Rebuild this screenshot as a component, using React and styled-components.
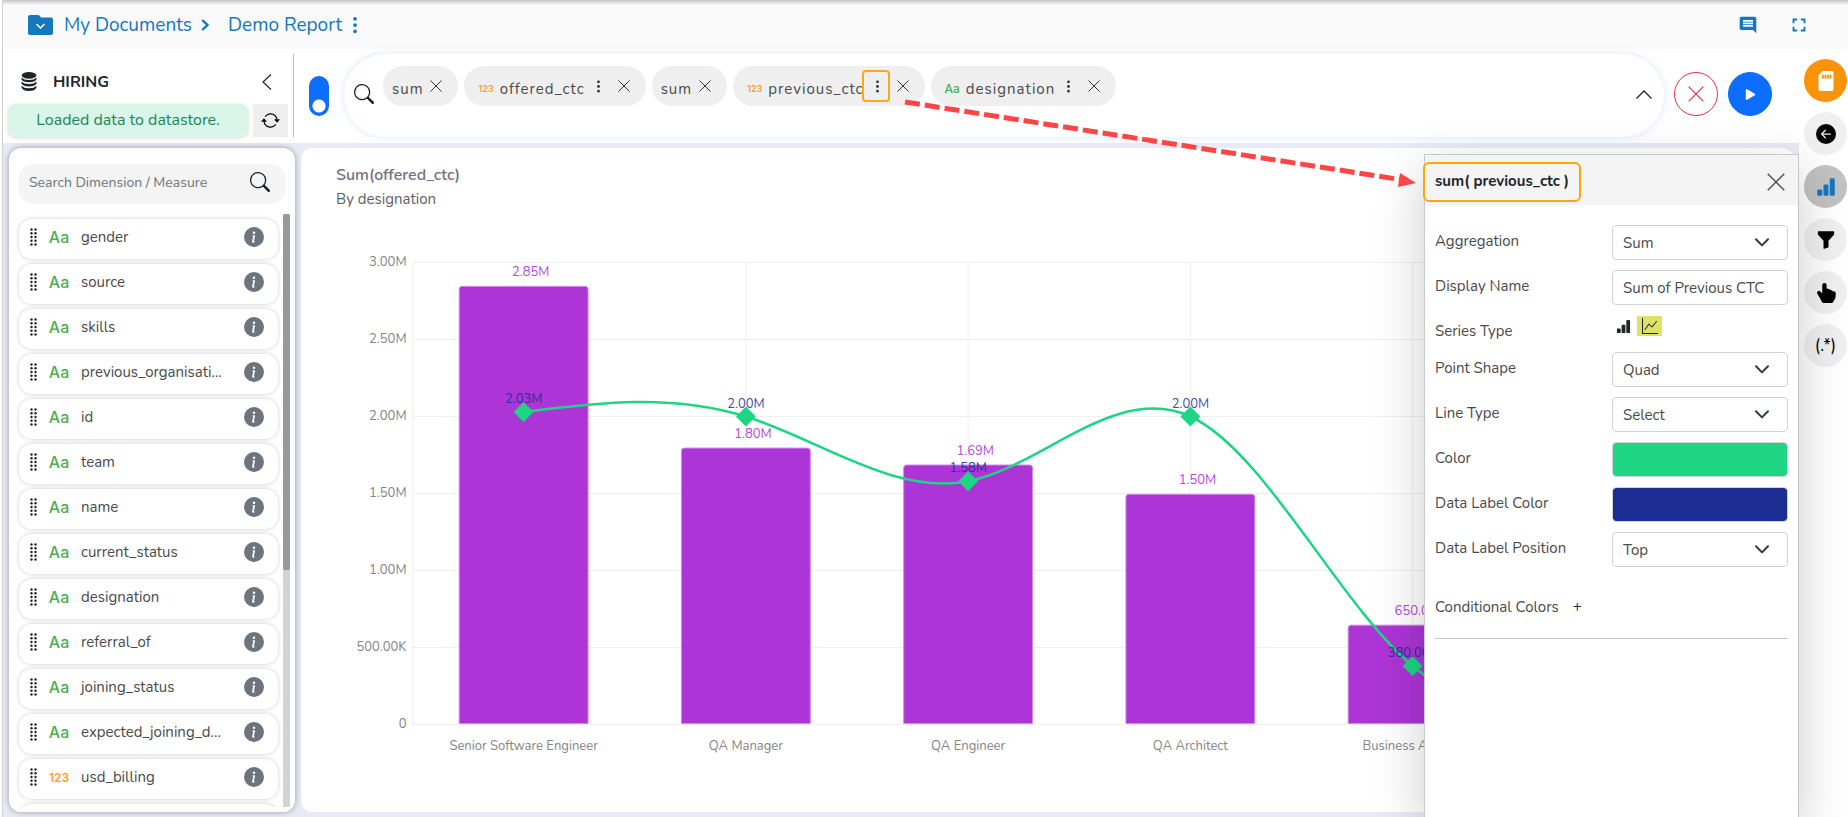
import React, { useLayoutEffect, useRef, useState } from "react";
import styled, { createGlobalStyle } from "styled-components";
import {
  BsSearch,
  BsThreeDotsVertical,
  BsInfoCircleFill,
  BsArrowRepeat,
  BsPlayFill,
  BsSdCardFill,
  BsArrowLeftCircleFill,
  BsBarChartFill,
  BsFunnelFill,
  BsGraphUp,
  BsHandIndexThumbFill,
} from "react-icons/bs";
import { MdComment, MdFullscreen } from "react-icons/md";

const GlobalStyle = createGlobalStyle`
  *, *::before, *::after { box-sizing: border-box; }
  html, body { margin: 0; background: #fff; }
  body, button, input, select {
    font-family: Nunito, Lato, "Open Sans", sans-serif;
    font-size: 15px;
    color: #4a4a4a;
  }
  button { padding: 0; border: 0; background: none; cursor: pointer; }
  h1, h2, h3, p, ul { margin: 0; padding: 0; font-weight: 400; }
  svg { display: block; flex: none; }
`;

/* ---------- shell ---------- */

const Page = styled.div`
  display: flex;
  flex-direction: column;
  height: 100vh;
  min-height: 640px;
  margin-left: 2px;
  border-left: 1px solid #d2d2d2;
  position: relative;
  overflow: hidden;
`;

const TopBar = styled.header`
  flex: none;
  height: 49px;
  display: flex;
  align-items: center;
  justify-content: space-between;
  padding: 0 38px 0 25px;
  background: linear-gradient(#c4c4c4, #fafafa 5px);
  color: #1577bd;
`;

const Crumbs = styled.nav`
  display: flex;
  align-items: center;
`;

const CrumbLink = styled.a`
  font-size: 19px;
  line-height: 28px;
  color: #1577bd;
  text-decoration: none;

  svg + & { margin-left: 11px; }
`;

const CrumbArrow = styled.span`
  padding: 0 19px 0 9px;
`;

const CrumbMenu = styled.button`
  color: #1577bd;
  padding-left: 3px;
`;

const TopActions = styled.div`
  display: flex;
  align-items: center;
  gap: 30px;

  button { color: #1577bd; }
`;

const Body = styled.div`
  flex: 1;
  min-height: 0;
  display: flex;
`;

const Content = styled.main`
  flex: 1;
  min-width: 0;
  position: relative;
  z-index: 1;
  display: flex;
  flex-direction: column;
`;

const Toolbar = styled.div`
  flex: none;
  display: flex;
  align-items: center;
  padding: 5px 27px 6px 5px;
  background: #fff;
`;

const Workspace = styled.div`
  flex: 1;
  min-height: 0;
  display: flex;
  gap: 6px;
  padding: 5px 5px 5px 6px;
  background: #e8ebf6;
`;

/* ---------- data source ---------- */

const Source = styled.section`
  flex: none;
  width: 286px;
  height: 83px;
  display: flex;
  flex-direction: column;
  justify-content: space-between;
  border-right: 1px solid #bcbcbc;
`;

const SourceHead = styled.div`
  flex: 1;
  display: flex;
  align-items: center;
  gap: 16px;
  padding: 5px 21px 0 13px;
  color: #212529;
`;

const SourceName = styled.h2`
  flex: 1;
  font-size: 16px;
  font-weight: 700;
  color: #212529;
`;

const SourceFoot = styled.div`
  display: flex;
  gap: 5px;
  padding-right: 5px;
`;

const Status = styled.p`
  flex: 1;
  height: 33px;
  border-radius: 8px;
  background: #daf6ea;
  box-shadow: 0 1px 4px rgba(0, 0, 0, 0.15);
  color: #198754;
  font-size: 16px;
  line-height: 33px;
  text-align: center;
`;

const RefreshButton = styled.button`
  width: 35px;
  height: 33px;
  display: grid;
  place-items: center;
  background: #efefef;
  color: #000;
`;

/* ---------- query bar ---------- */

const Toggle = styled.input`
  appearance: none;
  flex: none;
  width: 20px;
  height: 40px;
  margin: 0 15px;
  border-radius: 10px;
  background: radial-gradient(circle at 10px 30px, #fff 6px, transparent 7px) #0d6efd;
`;

const QueryBar = styled.div`
  flex: 1;
  min-width: 0;
  height: 83px;
  display: flex;
  align-items: flex-start;
  padding: 12px 12px 0 10px;
  border-radius: 42px;
  background: #fff;
  box-shadow: 0 0 8px rgba(13, 110, 253, 0.16);
`;

const QueryIcon = styled.span`
  padding: 18px 9px 0 0;
  color: #212529;
`;

const Chips = styled.ul`
  flex: 1;
  min-width: 0;
  display: flex;
  gap: 6px;
  list-style: none;
`;

const Chip = styled.li`
  height: 40px;
  display: flex;
  align-items: center;
  padding: 4px 16px 0 ${(p) => (p.$wide ? "14px" : "9px")};
  border-radius: 20px;
  background: #efefef;
  color: #4a4a4a;
`;

const ChipName = styled.span`
  padding: 2px ${(p) => (p.$menu ? "6px" : "7px")} 0 ${(p) => (p.$menu ? "6px" : "0")};
  font-size: 15px;
  letter-spacing: 1px;
`;

const ChipButton = styled.button`
  display: grid;
  place-items: center;
  height: 16px;
  color: #333;
  margin-bottom: 4px;
`;

const ChipMenu = styled(ChipButton)`
  position: relative;
  width: 12px;
  margin-right: 15px;

  svg { z-index: 1; }

  &::before {
    content: "";
    display: ${(p) => (p.$marked ? "block" : "none")};
    position: absolute;
    inset: -8px;
    border: 2px solid #fba919;
    border-radius: 4px;
    background: #efefef;
  }
`;

const TypeTag = styled.span`
  flex: none;
  font-family: Inter, sans-serif;
  font-size: ${(p) => (p.$small ? (p.$number ? "9px" : "12px") : p.$number ? "12px" : "16px")};
  font-weight: ${(p) => (p.$number ? 600 : 500)};
  color: ${(p) => (p.$number ? "#ff9f1c" : "#4fae54")};
`;

const CollapseButton = styled.button`
  padding-top: 24px;
  color: #212529;
`;

const RoundButton = styled.button`
  flex: none;
  width: 44px;
  height: 44px;
  margin: 0 0 3px 10px;
  display: grid;
  place-items: center;
  border-radius: 50%;
  border: 1px solid ${(p) => (p.$primary ? "#0d6efd" : "#dc3545")};
  background: ${(p) => (p.$primary ? "#0d6efd" : "#fff")};
  color: ${(p) => (p.$primary ? "#fff" : "#dc3545")};
`;

/* ---------- field list ---------- */

const FieldPanel = styled.aside`
  flex: none;
  width: 286px;
  min-height: 0;
  display: flex;
  flex-direction: column;
  padding: 16px 5px 5px 10px;
  border-radius: 12px;
  background: #fff;
  box-shadow: 0 0 6px rgba(0, 0, 0, 0.35);
`;

const FieldSearch = styled.label`
  flex: none;
  height: 40px;
  margin-right: 5px;
  display: flex;
  align-items: center;
  padding: 0 15px 4px 10px;
  border-radius: 14px;
  background: #f4f4f4;
  color: #212529;

  input {
    flex: 1;
    min-width: 0;
    padding: 0;
    border: 0;
    outline: 0;
    background: none;
    font-size: 14px;
  }
  input::placeholder { color: #6c757d; opacity: 1; }
`;

const FieldScroller = styled.div`
  flex: 1;
  min-height: 0;
  margin-top: 10px;
  display: flex;
  justify-content: space-between;
`;

const FieldList = styled.ul`
  flex: 1;
  min-width: 0;
  display: flex;
  flex-direction: column;
  gap: 5px;
  padding: 5px 5px 0 5px;
  margin-left: -5px;
  overflow: hidden;
  list-style: none;
`;

const Field = styled.li`
  flex: none;
  height: 40px;
  display: flex;
  align-items: center;
  padding: 0 14px 4px 11px;
  border-radius: 13px;
  background: #fff;
  box-shadow: 0 0 4px rgba(0, 0, 0, 0.2);
`;

const FieldType = styled.span`
  width: 44px;
  display: flex;
  justify-content: center;
`;

const FieldName = styled.span`
  flex: 1;
  font-size: 15px;
`;

const InfoButton = styled.button`
  color: #6c757d;
`;

const Track = styled.div`
  width: 7px;
  background: #d3d3d3;

  &::before {
    content: "";
    display: block;
    height: 60%;
    background: #999;
    border-radius: 2px;
  }
`;

/* ---------- chart ---------- */

const ChartCard = styled.section`
  flex: 1;
  min-width: 0;
  padding-top: 15px;
  border-radius: 12px;
  background: #fff;
  overflow: hidden;
`;

const ChartTitle = styled.h1`
  padding: 0 35px;
  font-size: 16px;
  line-height: 24px;
  font-weight: 600;
  color: #746e82;
`;

const ChartSubtitle = styled.p`
  padding: 0 35px;
  font-size: 15px;
  line-height: 24px;
  color: #5f5f5f;
`;

const Plot = styled.svg`
  width: 100%;
  height: 560px;
  font-size: 13px;

  .grid { stroke: #efefef; }
  .tick { fill: #858585; }
  .bar { fill: #ad34d6; stroke: #cf8ae8; }
  .bar-label { fill: #b84bdc; }
  .line { fill: none; stroke: #1dd582; stroke-width: 2.5; }
  .point { fill: #1dd582; }
  .point-label { fill: #1b2d93; opacity: 0.85; }
`;

/* ---------- settings popover ---------- */

const Popover = styled.section`
  position: absolute;
  top: 105px;
  right: 0;
  bottom: -1px;
  width: 375px;
  border: 1px solid #c8c8c8;
  background: #fff;
  box-shadow: 0 16px 48px rgba(0, 0, 0, 0.2);
`;

const PopoverHead = styled.div`
  height: 50px;
  display: flex;
  align-items: center;
  justify-content: space-between;
  padding: 4px 13px 0 0;
  background: #f4f4f4;
  color: #212529;
`;

const PopoverTitle = styled.h2`
  height: 40px;
  margin-left: -2px;
  padding: 0 10px;
  border: 2px solid #fba90a;
  border-radius: 6px;
  font-size: 15px;
  font-weight: 700;
  line-height: 34px;
`;

const Form = styled.form`
  display: flex;
  flex-direction: column;
  gap: 10px;
  padding: 20px 10px 0;
`;

const FormRow = styled.div`
  display: flex;
  justify-content: space-between;
  height: ${(p) => (p.$short ? "27px" : "35px")};
`;

const FormLabel = styled.label`
  font-size: 15px;
  line-height: 32px;
`;

const Control = styled.div`
  width: 176px;
  height: 35px;
  display: grid;
  align-items: center;

  > * { grid-area: 1 / 1; }
  > svg { justify-self: end; margin-right: 19px; pointer-events: none; color: #343a40; }

  select, input {
    width: 100%;
    height: 35px;
    padding: 0 10px;
    border: 1px solid #ced4da;
    border-radius: 4px;
    background: #fff;
    font-size: 15px;
    appearance: none;
    outline: 0;
  }
  input[type="color"] { padding: 0; }
  input[type="color"]::-webkit-color-swatch-wrapper { padding: 0; }
  input[type="color"]::-webkit-color-swatch { border: 0; border-radius: 3px; }
`;

const SeriesTypes = styled.div`
  width: 176px;
  display: flex;
  gap: 6px;
  padding-top: 1px;
`;

const SeriesButton = styled.button`
  width: ${(p) => (p.$active ? "25px" : "19px")};
  height: 20px;
  display: flex;
  align-items: center;
  justify-content: ${(p) => (p.$active ? "center" : "flex-end")};
  background: ${(p) => (p.$active ? "#dfe268" : "none")};
  color: #212529;
`;

const Conditional = styled.div`
  display: flex;
  align-items: center;
  gap: 14px;
  margin-top: 14px;
  padding-bottom: 15px;
  border-bottom: 1px solid #c4c4c4;
  line-height: 32px;

  button { color: #212529; line-height: 20px; }
`;

/* ---------- right rail ---------- */

const Rail = styled.aside`
  flex: none;
  width: 49px;
  display: flex;
  flex-direction: column;
  gap: 10px;
  padding: 10px 1px 0 5px;
  background: #fff;
`;

const railTones = {
  orange: ["#fb9308", "#fff"],
  active: ["#c2c2c2", "#1577bd"],
  plain: ["#f0f0f0", "#000"],
};

const RailButton = styled.button`
  width: 43px;
  height: 43px;
  display: grid;
  place-items: center;
  border-radius: 50%;
  background: ${(p) => railTones[p.$tone][0]};
  color: ${(p) => railTones[p.$tone][1]};
  font-size: 17px;
`;

const Pointer = styled.svg`
  position: absolute;
  left: 896px;
  top: 96px;
  z-index: 2;
  pointer-events: none;
`;

/* ---------- small drawings ---------- */

const Cross = ({ size = 12, width = 1 }) => (
  <svg width={size} height={size} viewBox="0 0 12 12" fill="none" stroke="currentColor" strokeWidth={width}>
    <path d="M0.5 0.5L11.5 11.5M11.5 0.5L0.5 11.5" />
  </svg>
);

const FolderIcon = () => (
  <svg width="25" height="20" viewBox="0 0 25 20">
    <path d="M2 0H10Q11 0 11.8 1L13 2.6H23Q25 2.6 25 4.6V18Q25 20 23 20H2Q0 20 0 18V2Q0 0 2 0Z" fill="#1577bd" />
    <path d="M8.5 9L12.5 13L16.5 9" fill="none" stroke="#fff" strokeWidth="1.5" />
  </svg>
);

const DatabaseIcon = () => (
  <svg width="16" height="19" viewBox="0 0 16 19" fill="currentColor">
    <ellipse cx="8" cy="3.4" rx="7.3" ry="3.4" />
    <path d="M0.5 5.5Q3 8 8 8T15.5 5.5V7.5Q14 10.2 8 10.2T0.5 7.5Z" />
    <path d="M0.5 9.5Q3 12 8 12T15.5 9.5V11.5Q14 14.4 8 14.4T0.5 11.5Z" />
    <path d="M0.5 13.7Q3 16.2 8 16.2T15.5 13.7V15.5Q14 19 8 19T0.5 15.5Z" />
  </svg>
);

const GripIcon = () => (
  <svg width="7" height="18" viewBox="0 0 7 18" fill="#212529">
    {[1.5, 5.2, 9, 12.8, 16.5].map((y) => (
      <g key={y}>
        <circle cx="1.5" cy={y} r="1.2" />
        <circle cx="5.5" cy={y} r="1.2" />
      </g>
    ))}
  </svg>
);

const SelectArrow = () => (
  <svg width="14" height="9" viewBox="0 0 14 9" fill="none" stroke="currentColor" strokeWidth="2" strokeLinecap="round" strokeLinejoin="round">
    <path d="M1 1.2L7 7.4L13 1.2" />
  </svg>
);

/* ---------- data ---------- */

const fields = [
  "gender", "source", "skills", "previous_organisati...", "id", "team", "name",
  "current_status", "designation", "referral_of", "joining_status", "expected_joining_d...",
].map((name) => ({ name }));
fields.push({ name: "usd_billing", number: true });

const chips = [
  { name: "sum" },
  { name: "offered_ctc", type: "123" },
  { name: "sum" },
  { name: "previous_ctc", type: "123", marked: true },
  { name: "designation", type: "Aa" },
];

const series = [
  { label: "Senior Software Engineer", bar: 2.845, barText: "2.85M", point: 2.03, pointText: "2.03M" },
  { label: "QA Manager", bar: 1.795, barText: "1.80M", point: 2.0, pointText: "2.00M" },
  { label: "QA Engineer", bar: 1.685, barText: "1.69M", point: 1.58, pointText: "1.58M" },
  { label: "QA Architect", bar: 1.495, barText: "1.50M", point: 2.0, pointText: "2.00M" },
  { label: "Business Analyst", bar: 0.645, barText: "650.00K", point: 0.38, pointText: "380.00K" },
  { point: 0.34 },
];

const ticks = ["3.00M", "2.50M", "2.00M", "1.50M", "1.00M", "500.00K", "0"];

/* Natural cubic spline through evenly spaced points, as a Bezier path. */
function splinePath(pts) {
  const n = pts.length;
  const slope = new Array(n).fill(0);
  for (let k = 0; k < 60; k++) {
    for (let i = 0; i < n; i++) {
      if (i === 0) slope[0] = (3 * (pts[1][1] - pts[0][1]) - slope[1]) / 2;
      else if (i === n - 1) slope[i] = (3 * (pts[i][1] - pts[i - 1][1]) - slope[i - 1]) / 2;
      else slope[i] = (3 * (pts[i + 1][1] - pts[i - 1][1]) - slope[i - 1] - slope[i + 1]) / 4;
    }
  }
  let d = `M${pts[0]}`;
  for (let i = 1; i < n; i++) {
    const [x0, y0] = pts[i - 1];
    const [x1, y1] = pts[i];
    const third = (x1 - x0) / 3;
    d += `C${x0 + third},${y0 + slope[i - 1] / 3} ${x1 - third},${y1 - slope[i] / 3} ${x1},${y1}`;
  }
  return d;
}

function ComboChart() {
  const ref = useRef(null);
  const [width, setWidth] = useState(1493);
  useLayoutEffect(() => {
    const measure = () => setWidth(ref.current.getBoundingClientRect().width);
    measure();
    window.addEventListener("resize", measure);
    return () => window.removeEventListener("resize", measure);
  }, []);

  const left = 111.5;
  const right = width - 48;
  const top = 51.5;
  const bottom = 513.5;
  const band = (right - left) / series.length;
  const y = (v) => bottom - (v / 3) * (bottom - top);
  const x = (i) => left + band * (i + 0.5);
  const points = series.map((s, i) => [x(i), y(s.point)]);
  const full = series.filter((s) => s.label);

  return (
    <Plot ref={ref} role="img" aria-label="Offered and previous CTC by designation">
      {ticks.map((t, i) => {
        const ty = top + (i * (bottom - top)) / 6;
        return (
          <g key={t}>
            <line className="grid" x1={left} x2={right} y1={ty} y2={ty} />
            <text className="tick" x={left - 6} y={ty + 3} textAnchor="end">{t}</text>
          </g>
        );
      })}
      <line className="grid" x1={left + 0.5} x2={left + 0.5} y1={top} y2={bottom} />
      {full.map((s, i) => (
        <g key={s.label}>
          <line className="grid" x1={x(i)} x2={x(i)} y1={top} y2={bottom} />
          <path
            className="bar"
            d={`M${x(i) - band * 0.29},${bottom - 1}V${y(s.bar) + 3}q0,-3 3,-3H${x(i) + band * 0.29 - 3}q3,0 3,3V${bottom - 1}Z`}
          />
          <text className="bar-label" x={x(i) + 7} y={y(s.bar) - 10} textAnchor="middle">{s.barText}</text>
          <text className="tick" x={x(i)} y={bottom + 25} textAnchor="middle">{s.label}</text>
        </g>
      ))}
      <path className="line" d={splinePath(points)} />
      {full.map((s, i) => (
        <g key={s.label}>
          <path className="point" d={`M${points[i][0]},${points[i][1] - 10}l10,10l-10,10l-10,-10Z`} />
          <text className="point-label" x={x(i)} y={points[i][1] - 9} textAnchor="middle">{s.pointText}</text>
        </g>
      ))}
    </Plot>
  );
}

function SelectRow({ id, label, value }) {
  return (
    <FormRow>
      <FormLabel htmlFor={id}>{label}</FormLabel>
      <Control>
        <select id={id} defaultValue={value}>
          <option>{value}</option>
        </select>
        <SelectArrow />
      </Control>
    </FormRow>
  );
}

function InputRow({ id, label, type, value }) {
  return (
    <FormRow>
      <FormLabel htmlFor={id}>{label}</FormLabel>
      <Control>
        <input id={id} type={type} defaultValue={value} />
      </Control>
    </FormRow>
  );
}

export default function App() {
  return (
    <Page>
      <GlobalStyle />
      <TopBar>
        <Crumbs aria-label="Breadcrumb">
          <FolderIcon />
          <CrumbLink href="#documents">My Documents</CrumbLink>
          <CrumbArrow>
            <svg width="8" height="12" viewBox="0 0 8 12" fill="none" stroke="currentColor" strokeWidth="2.4">
              <path d="M1.2 1L6.4 6L1.2 11" />
            </svg>
          </CrumbArrow>
          <CrumbLink href="#report">Demo Report</CrumbLink>
          <CrumbMenu aria-label="Report menu"><BsThreeDotsVertical size={20} /></CrumbMenu>
        </Crumbs>
        <TopActions>
          <button aria-label="Comments"><MdComment size={20} /></button>
          <button aria-label="Full screen"><MdFullscreen size={22} /></button>
        </TopActions>
      </TopBar>

      <Body>
        <Content>
          <Toolbar>
            <Source>
              <SourceHead>
                <DatabaseIcon />
                <SourceName>HIRING</SourceName>
                <button aria-label="Collapse data source">
                  <svg width="10" height="16" viewBox="0 0 10 16" fill="none" stroke="#212529" strokeWidth="1.2">
                    <path d="M9 0.5L1 8L9 15.5" />
                  </svg>
                </button>
              </SourceHead>
              <SourceFoot>
                <Status role="status">Loaded data to datastore.</Status>
                <RefreshButton aria-label="Refresh"><BsArrowRepeat size={19} /></RefreshButton>
              </SourceFoot>
            </Source>
            <Toggle type="checkbox" role="switch" defaultChecked aria-label="Search mode" />
            <QueryBar>
              <QueryIcon><BsSearch size={20} /></QueryIcon>
              <Chips>
                {chips.map((c, i) => (
                  <Chip key={i} $wide={!!c.type}>
                    {c.type && <TypeTag $small $number={c.type === "123"}>{c.type}</TypeTag>}
                    <ChipName $menu={!!c.type}>{c.name}</ChipName>
                    {c.type && (
                      <ChipMenu $marked={c.marked} aria-label={`${c.name} options`}>
                        <BsThreeDotsVertical size={15} />
                      </ChipMenu>
                    )}
                    <ChipButton aria-label={`Remove ${c.name}`}><Cross /></ChipButton>
                  </Chip>
                ))}
              </Chips>
              <CollapseButton aria-label="Collapse query">
                <svg width="16" height="9" viewBox="0 0 16 9" fill="none" stroke="currentColor" strokeWidth="1.3">
                  <path d="M0.5 8.5L8 1L15.5 8.5" />
                </svg>
              </CollapseButton>
            </QueryBar>
            <RoundButton aria-label="Clear query"><Cross size={16} width={0.9} /></RoundButton>
            <RoundButton $primary aria-label="Run query"><BsPlayFill size={19} /></RoundButton>
          </Toolbar>

          <Workspace>
            <FieldPanel>
              <FieldSearch>
                <input type="text" aria-label="Search fields" placeholder="Search Dimension / Measure" />
                <BsSearch size={20} />
              </FieldSearch>
              <FieldScroller>
                <FieldList>
                  {fields.map((f) => (
                    <Field key={f.name}>
                      <GripIcon />
                      <FieldType>
                        <TypeTag $number={f.number}>{f.number ? "123" : "Aa"}</TypeTag>
                      </FieldType>
                      <FieldName>{f.name}</FieldName>
                      <InfoButton aria-label={`About ${f.name}`}><BsInfoCircleFill size={20} /></InfoButton>
                    </Field>
                  ))}
                  <Field aria-hidden="true" />
                </FieldList>
                <Track />
              </FieldScroller>
            </FieldPanel>

            <ChartCard>
              <ChartTitle>Sum(offered_ctc)</ChartTitle>
              <ChartSubtitle>By designation</ChartSubtitle>
              <ComboChart />
            </ChartCard>
          </Workspace>

          <Popover>
            <PopoverHead>
              <PopoverTitle>sum( previous_ctc )</PopoverTitle>
              <button aria-label="Close settings"><Cross size={18} width={0.9} /></button>
            </PopoverHead>
            <Form>
              <SelectRow id="aggregation" label="Aggregation" value="Sum" />
              <InputRow id="display-name" label="Display Name" type="text" value="Sum of Previous CTC" />
              <FormRow $short>
                <FormLabel as="span">Series Type</FormLabel>
                <SeriesTypes>
                  <SeriesButton type="button" aria-label="Bar"><BsBarChartFill size={15} /></SeriesButton>
                  <SeriesButton type="button" $active aria-label="Line"><BsGraphUp size={16} /></SeriesButton>
                </SeriesTypes>
              </FormRow>
              <SelectRow id="point-shape" label="Point Shape" value="Quad" />
              <SelectRow id="line-type" label="Line Type" value="Select" />
              <InputRow id="color" label="Color" type="color" value="#1dd582" />
              <InputRow id="label-color" label="Data Label Color" type="color" value="#1b2d93" />
              <SelectRow id="label-position" label="Data Label Position" value="Top" />
              <Conditional>
                <span>Conditional Colors</span>
                <button type="button" aria-label="Add conditional color">+</button>
              </Conditional>
            </Form>
          </Popover>
        </Content>

        <Rail>
          <RailButton $tone="orange" aria-label="Save"><BsSdCardFill size={20} /></RailButton>
          <RailButton $tone="plain" aria-label="Back"><BsArrowLeftCircleFill size={20} /></RailButton>
          <RailButton $tone="active" aria-label="Charts"><BsBarChartFill size={20} /></RailButton>
          <RailButton $tone="plain" aria-label="Filter"><BsFunnelFill size={20} /></RailButton>
          <RailButton $tone="plain" aria-label="Interactions"><BsHandIndexThumbFill size={20} /></RailButton>
          <RailButton $tone="plain" aria-label="Expressions">(.*)</RailButton>
        </Rail>
      </Body>

      <Pointer width="524" height="100" viewBox="0 0 524 100">
        <path d="M6 6L504 84" stroke="#ff4545" strokeWidth="5" strokeDasharray="15 5" />
        <path d="M501 77L517 87L499 91Z" fill="#ff4545" />
      </Pointer>
    </Page>
  );
}
